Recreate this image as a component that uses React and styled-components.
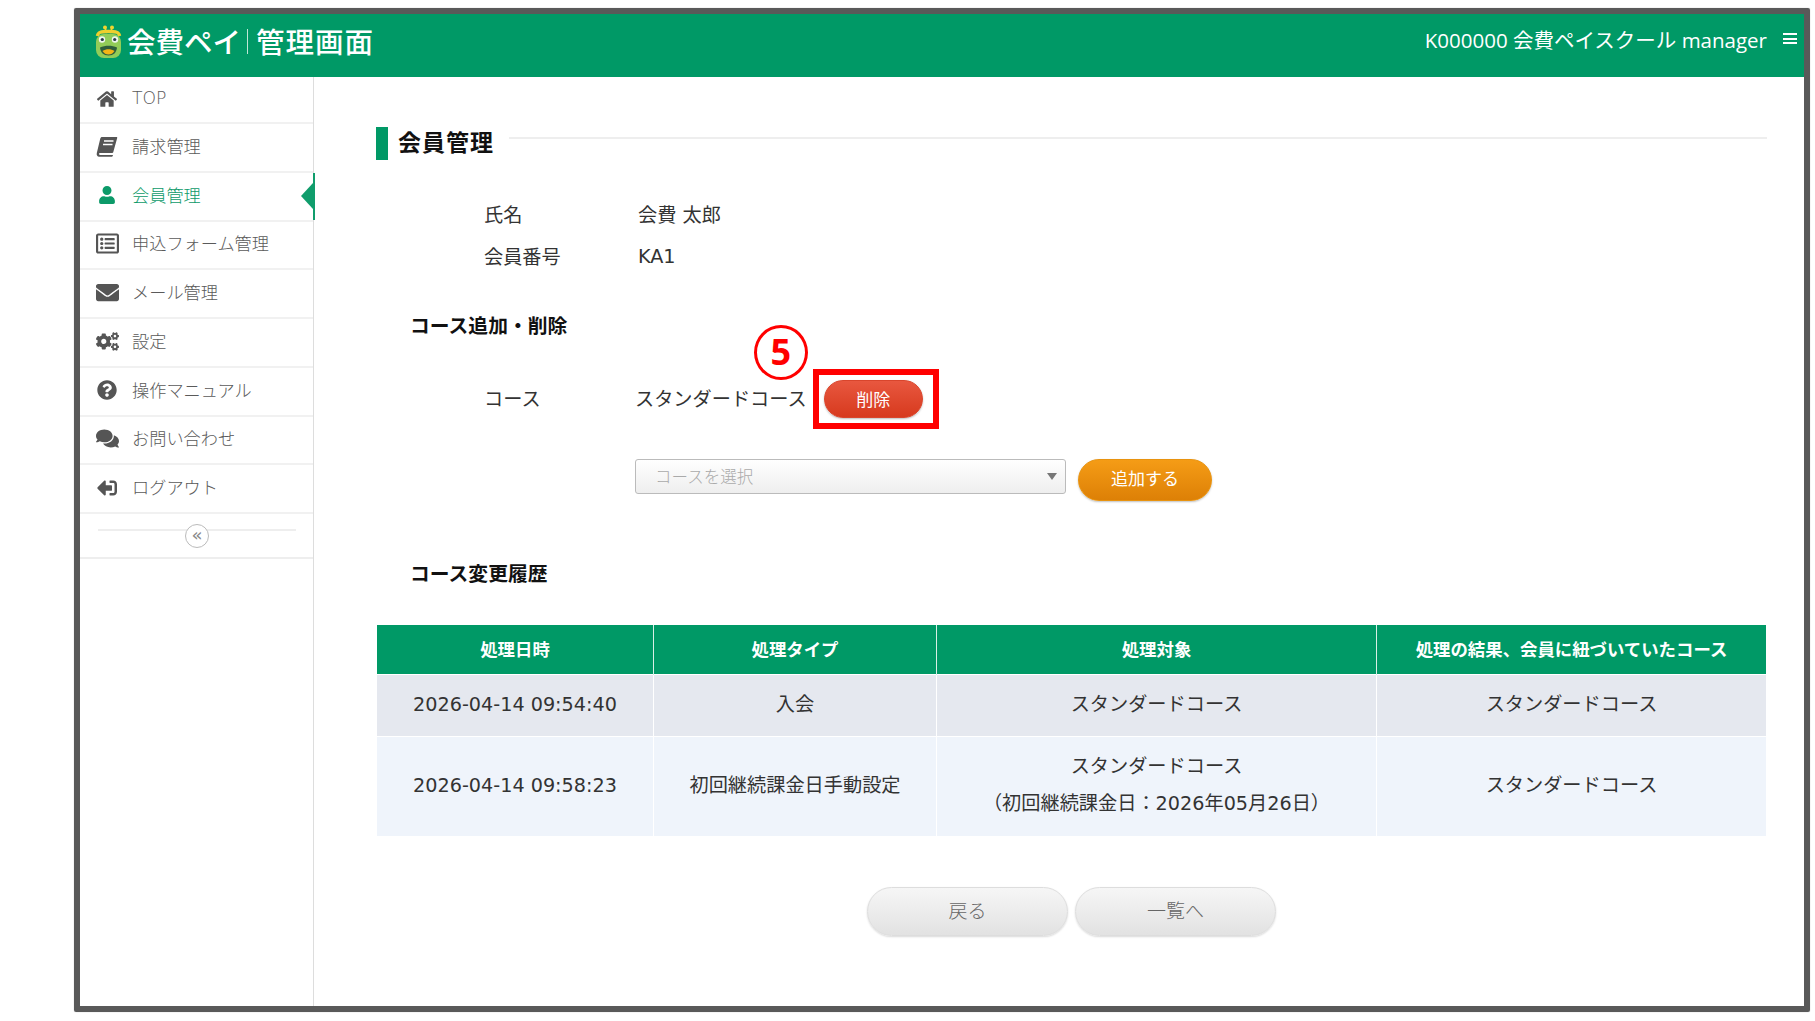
import React from 'react';
import styled, { createGlobalStyle } from 'styled-components';
import { FaHome, FaUser, FaRegListAlt, FaEnvelope, FaCogs, FaQuestionCircle, FaComments, FaSignOutAlt } from 'react-icons/fa';

const GREEN = '#009966';
const Global = createGlobalStyle`
  html, body { margin: 0; padding: 0; background: #fff; }
  body { font-family: "DejaVu Sans", "Noto Sans CJK JP", sans-serif; color: #222; }
`;

const Page = styled.div`
  width: 1815px; height: 1021px; padding: 8px 5px 9px 74px; box-sizing: border-box; overflow: hidden;
`;
const Frame = styled.div`
  height: 100%; box-sizing: border-box; border: 6px solid #595959; border-radius: 2px;
  display: flex; flex-direction: column; box-shadow: 0 0 1px #999;
`;
const Header = styled.header`
  height: 63px; flex: none; background: ${GREEN}; color: #fff; display: flex; align-items: center;
  justify-content: space-between; padding: 0 7px 14px 15px; box-sizing: border-box;
`;
const Logo = styled.div`display: flex; align-items: center; font-family: "Noto Sans CJK JP", sans-serif; font-weight: 500; margin-top: 5px;`;
const LogoName = styled.span`font-size: 28.5px; margin-left: 5px; line-height: 34px;`;
const LogoSep = styled.span`width: 1px; height: 25px; background: #bfe6d6; margin: 0 8px 0 6px;`;
const LogoPage = styled.span`font-size: 28.5px; letter-spacing: 1px; line-height: 34px;`;
const Account = styled.div`display: flex; align-items: center; font-size: 20.5px; font-family: "Open Sans", "Noto Sans CJK JP", sans-serif;`;
const Burger = styled.span`
  display: block; width: 14px; height: 11px; margin-left: 16px;
  border-top: 2px solid #fff; border-bottom: 2px solid #fff; position: relative; box-sizing: border-box;
  &::after { content: ''; position: absolute; left: 0; right: 0; top: 2.5px; height: 2px; background: #fff; }
`;
const Body = styled.div`flex: 1; display: flex; min-height: 0;`;
const Side = styled.nav`width: 234px; flex: none; box-sizing: border-box; border-right: 1px solid #ddd; position: relative;`;
const NavRow = styled.div`
  height: ${p => p.$h || 48.75}px; box-sizing: border-box; border-bottom: 2px solid #f1f1f1; position: relative;
  display: flex; align-items: center; padding: 0 0 4px 15px; font-size: 17.2px; font-weight: 300;
  font-family: "DejaVu Sans", "Noto Sans CJK JP", sans-serif;
  color: ${p => (p.$active ? '#0c9a69' : '#5a5a5a')};
`;
const NavIcon = styled.span`
  width: 24px; height: 24px; margin: 2px 13px 0 0; display: flex; align-items: center; justify-content: center;
  font-size: ${p => p.$size || 20}px; color: ${p => (p.$active ? '#0c9a69' : '#555')};
  transform: ${p => (p.$flip ? 'scaleX(-1)' : 'none')};
`;
const ActiveMark = styled.span`
  position: absolute; right: -2px; top: 0; bottom: 0; width: 2px; background: #109d6c;
  &::before { content: ''; position: absolute; right: 2px; top: 50%; margin-top: -13px;
    border-top: 13px solid transparent; border-bottom: 13px solid transparent; border-right: 12px solid #109d6c; }
`;
const Collapse = styled.div`
  height: 45px; box-sizing: border-box; border-bottom: 2px solid #eee; padding: 15px 17px 0 18px; position: relative;
`;
const CollapseLine = styled.div`height: 2px; background: #eee;`;
const CollapseBtn = styled.span`
  position: absolute; left: 105px; top: 10px; width: 24px; height: 24px; border: 1px solid #bbb; border-radius: 50%;
  background: #fff; color: #888; display: flex; align-items: center; justify-content: center; font-size: 18px;
  line-height: 1; font-family: "DejaVu Sans", sans-serif; padding-bottom: 3px; box-sizing: border-box;
`;
const Main = styled.main`flex: 1; padding: 50px 37px 0 62px; box-sizing: border-box; min-width: 0;`;
const TitleRow = styled.div`display: flex; height: 33px; align-items: center;`;
const TitleBar = styled.span`width: 12px; height: 33px; background: ${GREEN}; margin-right: 10px;`;
const Title = styled.h1`margin: 0 0 5px; font-size: 23px; font-weight: 700; color: #111; line-height: 28px; letter-spacing: 1px; font-family: "Noto Sans CJK JP", sans-serif;`;
const TitleLine = styled.span`flex: 1; height: 2px; background: #eee; margin: 0 0 12px 15px;`;
const Info = styled.div`margin-top: 33px; padding-left: 108px;`;
const InfoRow = styled.div`display: flex; height: 42px; align-items: center; font-size: 19.2px; font-weight: 400; color: #333;`;
const InfoLabel = styled.span`width: ${p => p.$w || 154}px; flex: none;`;
const SubHead = styled.h2`
  margin: ${p => p.$mt}px 0 0; padding-left: 34px; font-size: 19.8px; line-height: 30px; font-weight: 700; color: #111;
  font-family: "Noto Sans CJK JP", sans-serif;
`;
const CourseRow = styled.div`display: flex; height: 38px; margin-top: 40px; padding-left: 108px; align-items: center; font-size: 19.2px; color: #333;`;
const CourseText = styled.span`display: flex; padding-bottom: 3px;`;
const Annotated = styled.div`position: relative; margin-left: 17px;`;
const RedBox = styled.span`
  position: absolute; left: -11px; right: -16px; top: -11px; bottom: -11px; border: 6px solid #f00; pointer-events: none;
`;
const Circled = styled.span`
  position: absolute; left: -70px; top: -55px; width: 54px; height: 55px; border: 3.5px solid #f00; border-radius: 50%;
  box-sizing: border-box; color: #f00; font: 700 36px/47px "Open Sans", sans-serif; text-align: center; background: #fff;
`;
const Pill = styled.button`
  border: 1px solid ${p => p.$edge}; border-radius: 21px; color: #fff; cursor: pointer; padding: 0 0 ${p => p.$pb}px;
  width: ${p => p.$w}px; height: ${p => p.$h}px; font-size: 17px; font-family: "Noto Sans CJK JP", sans-serif; font-weight: 400;
  background: linear-gradient(${p => p.$top}, ${p => p.$bottom}); box-shadow: 0 1px 2px rgba(0,0,0,.25);
`;
const AddRow = styled.div`display: flex; margin-top: 41px; padding-left: 259px; align-items: flex-start; gap: 12px;`;
const SelectBox = styled.div`
  width: 431px; height: 35px; box-sizing: border-box; border: 1px solid #bbb; border-radius: 3px;
  background: linear-gradient(#fff, #eee); color: #aaa; font-size: 16.5px; display: flex; align-items: center;
  justify-content: space-between; padding: 0 8px 2px 19px; font-family: "Noto Sans CJK JP", sans-serif; font-weight: 300;
`;
const Caret = styled.span`border-left: 5px solid transparent; border-right: 5px solid transparent; border-top: 7px solid #777; margin-top: 2px;`;
const HistoryTable = styled.table`
  width: 1386px; margin: 37px 0 0 1px; border-collapse: collapse; table-layout: fixed; font-size: 19.2px; color: #333; text-align: center;
`;
const Th = styled.th`
  background: ${GREEN}; color: #fff; height: 46px; padding: 0 0 3px; font-size: 17.4px; font-weight: 700; border-right: 1px solid #d9efe6;
  font-family: "Noto Sans CJK JP", sans-serif; width: ${p => p.$w}px; &:last-child { border-right: 0; }
`;
const Td = styled.td`
  padding: 0 0 3px; height: ${p => p.$h}px; background: ${p => p.$bg}; border-right: 1px solid #fff; line-height: 37px;
  &:last-child { border-right: 0; }
`;
const Tr = styled.tr`border-top: 1px solid #fff;`;
const Footer = styled.div`display: flex; justify-content: center; gap: 7px; margin-top: 51px;`;
const GrayBtn = styled.button`
  width: 201px; height: 49px; border: 1px solid #ddd; border-radius: 25px; background: linear-gradient(#f6f6f6, #e2e2e2);
  color: #666; font-size: 19px; font-family: "Noto Sans CJK JP", sans-serif; font-weight: 300; padding: 0 0 5px; cursor: pointer;
  box-shadow: 0 1px 2px rgba(0,0,0,.15);
`;

const BookIcon = () => (
  <svg width="22" height="21" viewBox="0 0 22 21" fill="#555">
    <path d="M6 1h14.500c.6 0 .9.500.7 1.100L17.300 16c-.2.700-.8 1-1.400 1H4c-.9 0-1.200.8-1 1.200.2.500.7.800 1.300.800H17l-.2.800c-.1.500-.6 1-1.200 1H3.500C1.300 21 .3 19 .8 17L4.300 2.500C4.500 1.600 5.200 1 6 1z" />
    <path d="M8 5h9.500M7 8.500h9.500" stroke="#fff" strokeWidth="1.300" />
  </svg>
);

const Frog = () => (
  <svg width="27" height="33" viewBox="0 0 27 33">
    <circle cx="10" cy="2.500" r="2" fill="#f0d52f" /><circle cx="17" cy="2.500" r="2" fill="#f0d52f" />
    <path d="M10 3l2 5M17 3l-2 5" stroke="#f0d52f" strokeWidth="1.500" />
    <path d="M2.500 11C3 7 6 6.500 13.500 6.500S24 7 24.500 11" stroke="#efcf2d" strokeWidth="3.400" fill="none" />
    <rect x="1" y="9" width="25" height="24" rx="8" fill="#92cd58" />
    <circle cx="7" cy="14.500" r="3.200" fill="#eef6ee" /><circle cx="20" cy="14.500" r="3.200" fill="#eef6ee" />
    <circle cx="7.300" cy="14.500" r="1.600" fill="#2a3a4a" /><circle cx="19.700" cy="14.500" r="1.600" fill="#2a3a4a" />
    <path d="M5 22.500c5-2.500 12-2.500 17 0-.5 5-3.500 8-8.500 8S5.500 27.500 5 22.500z" fill="#2f5f3c" />
    <path d="M7.500 26c3.500-2.500 8.500-2.500 12 0-1.500 2.500-3.500 3.500-6 3.500s-4.500-1-6-3.500z" fill="#f3b416" />
  </svg>
);

const nav = [
  { icon: <FaHome />, label: 'TOP', h: 47 },
  { icon: <BookIcon />, label: '請求管理' },
  { icon: <FaUser />, label: '会員管理', active: true, size: 18 },
  { icon: <FaRegListAlt />, label: '申込フォーム管理', size: 23 },
  { icon: <FaEnvelope />, label: 'メール管理', size: 23 },
  { icon: <FaCogs />, label: '設定', size: 23 },
  { icon: <FaQuestionCircle />, label: '操作マニュアル' },
  { icon: <FaComments />, label: 'お問い合わせ', size: 23 },
  { icon: <FaSignOutAlt />, label: 'ログアウト', flip: true },
];

const rows = [
  { h: 58, bg: '#e5e8ef', c: ['2026-04-14 09:54:40', '入会', ['スタンダードコース'], 'スタンダードコース'] },
  { h: 96, bg: '#eff4fb', c: ['2026-04-14 09:58:23', '初回継続課金日手動設定', ['スタンダードコース', '（初回継続課金日：2026年05月26日）'], 'スタンダードコース'] },
];

export default function App() {
  return (
    <Page>
      <Global />
      <Frame>
        <Header>
          <Logo>
            <Frog />
            <LogoName>会費ペイ</LogoName>
            <LogoSep />
            <LogoPage>管理画面</LogoPage>
          </Logo>
          <Account>K000000 会費ペイスクール manager<Burger /></Account>
        </Header>
        <Body>
          <Side>
            {nav.map(n => (
              <NavRow key={n.label} $h={n.h} $active={n.active}>
                <NavIcon $active={n.active} $size={n.size} $flip={n.flip}>{n.icon}</NavIcon>
                {n.label}
                {n.active && <ActiveMark />}
              </NavRow>
            ))}
            <Collapse>
              <CollapseLine />
              <CollapseBtn>«</CollapseBtn>
            </Collapse>
          </Side>
          <Main>
            <TitleRow>
              <TitleBar />
              <Title>会員管理</Title>
              <TitleLine />
            </TitleRow>
            <Info>
              <InfoRow><InfoLabel>氏名</InfoLabel>会費 太郎</InfoRow>
              <InfoRow><InfoLabel>会員番号</InfoLabel>KA1</InfoRow>
            </Info>
            <SubHead $mt={33}>コース追加・削除</SubHead>
            <CourseRow>
              <InfoLabel $w={151}><CourseText>コース</CourseText></InfoLabel>
              <CourseText>スタンダードコース</CourseText>
              <Annotated>
                <Pill $w={99} $h={38} $pb={1} $edge="#d9452c" $top="#e8573f" $bottom="#d73a1e">削除</Pill>
                <RedBox />
                <Circled>5</Circled>
              </Annotated>
            </CourseRow>
            <AddRow>
              <SelectBox>コースを選択<Caret /></SelectBox>
              <Pill $w={134} $h={42} $pb={5} $edge="#e8930f" $top="#f59c16" $bottom="#dd8006">追加する</Pill>
            </AddRow>
            <SubHead $mt={57}>コース変更履歴</SubHead>
            <HistoryTable>
              <thead>
                <tr>
                  <Th $w={276}>処理日時</Th>
                  <Th $w={282}>処理タイプ</Th>
                  <Th $w={439}>処理対象</Th>
                  <Th $w={389}>処理の結果、会員に紐づいていたコース</Th>
                </tr>
              </thead>
              <tbody>
                {rows.map(r => (
                  <Tr key={r.c[0]}>
                    <Td $h={r.h} $bg={r.bg}>{r.c[0]}</Td>
                    <Td $h={r.h} $bg={r.bg}>{r.c[1]}</Td>
                    <Td $h={r.h} $bg={r.bg}>{r.c[2].map(t => <div key={t}>{t}</div>)}</Td>
                    <Td $h={r.h} $bg={r.bg}>{r.c[3]}</Td>
                  </Tr>
                ))}
              </tbody>
            </HistoryTable>
            <Footer>
              <GrayBtn>戻る</GrayBtn>
              <GrayBtn>一覧へ</GrayBtn>
            </Footer>
          </Main>
        </Body>
      </Frame>
    </Page>
  );
}
